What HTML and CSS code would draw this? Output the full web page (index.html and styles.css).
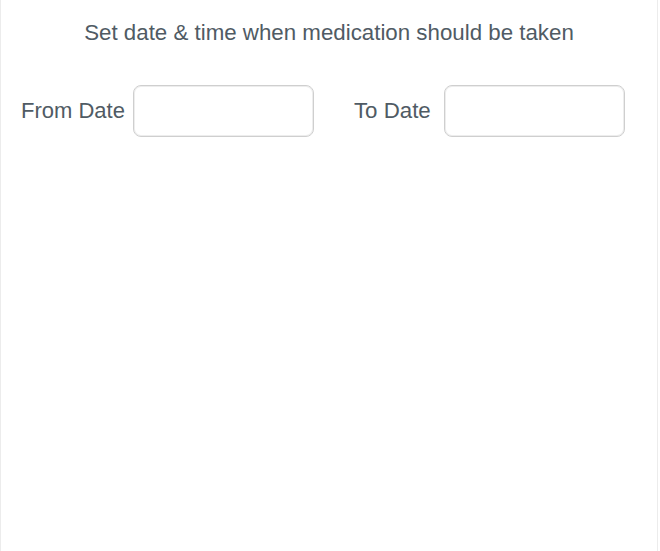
FILE: index.html
```html
<!DOCTYPE html>
<html lang="en">
<head>
<meta charset="utf-8">
<title>Medication schedule</title>
<link rel="stylesheet" href="styles.css">
</head>
<body>
<div class="panel">
  <p class="title">Set date &amp; time when medication should be taken</p>
  <div class="dates">
    <label class="field field-from">
      <span class="field-label">From Date</span>
      <input class="date-input" type="text">
    </label>
    <label class="field field-to">
      <span class="field-label">To Date</span>
      <input class="date-input" type="text">
    </label>
  </div>
</div>
</body>
</html>
```
FILE: styles.css
```css
html, body {
  margin: 0;
  padding: 0;
  background: #ffffff;
}
body {
  font-family: "Liberation Sans", Arial, Helvetica, sans-serif;
  color: #505b64;
}
.panel {
  box-sizing: border-box;
  width: 658px;
  height: 551px;
  border-left: 1px solid #ececec;
  border-right: 1px solid #ececec;
  padding-top: 20px;
}
.title {
  margin: 0;
  font-size: 22.3px;
  line-height: 26px;
  text-align: center;
}
.dates {
  display: flex;
  align-items: center;
  margin-top: 39px;
  padding-left: 20px;
}
.field {
  display: flex;
  align-items: center;
}
.field-to {
  margin-left: 40px;
}
.field-label {
  font-size: 22px;
  line-height: 26px;
  margin-right: 8px;
}
.field-to .field-label {
  font-size: 22.3px;
  margin-right: 13px;
}
.date-input {
  box-sizing: border-box;
  width: 181px;
  height: 52px;
  margin: 0;
  border: 1px solid #cfcfcf;
  border-radius: 8px;
  background: #ffffff;
  box-shadow: inset 0 0 0 1px #ededed;
  font-family: inherit;
  font-size: 18px;
  outline: none;
}
```
